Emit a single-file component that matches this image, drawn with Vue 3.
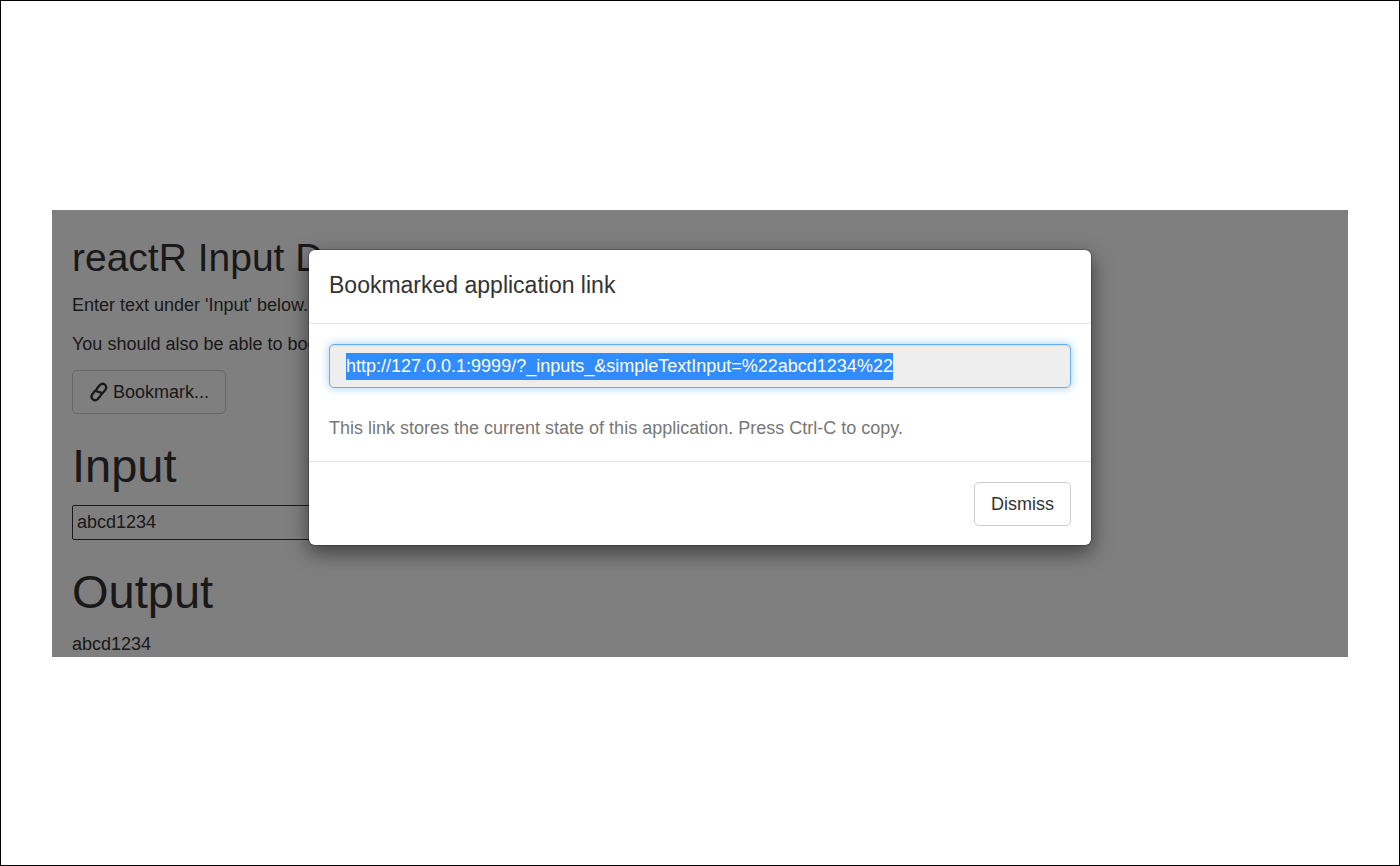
<script setup>
import { onMounted, ref } from 'vue'

const text = ref('abcd1234')
const link = 'http://127.0.0.1:9999/?_inputs_&simpleTextInput=%22abcd1234%22'
const linkField = ref(null)

onMounted(() => {
  linkField.value.focus()
  linkField.value.select()
})
</script>

<template>
  <div class="frame">
    <div class="stage">
      <main class="app">
        <h2>reactR Input Demo</h2>
        <p>Enter text under 'Input' below.</p>
        <p>You should also be able to bookmark</p>
        <button class="btn" type="button">
          <svg class="icon" viewBox="0 0 57 60" aria-hidden="true">
            <path
              d="M37 36L48 23Q53 14 46 8Q38 2 31 9L23 19Q17 27 25 29.5L31 30.5Q39 33 33 41L25 51Q18 58 10 52Q3 46 8 37L19 24"
              fill="none"
              stroke="currentColor"
              stroke-width="7"
            />
          </svg>
          Bookmark...
        </button>
        <h1 id="input-title">Input</h1>
        <input v-model="text" class="plain" type="text" aria-labelledby="input-title" />
        <h1>Output</h1>
        <div>{{ text }}</div>
      </main>
      <div class="backdrop">
        <section class="modal" role="dialog" aria-labelledby="modal-title">
          <header><h4 id="modal-title">Bookmarked application link</h4></header>
          <div class="body">
            <div class="link">
              <input ref="linkField" type="text" readonly :value="link" aria-labelledby="modal-title" />
            </div>
            <span class="help">This link stores the current state of this application. Press Ctrl-C to copy.</span>
          </div>
          <footer><button class="btn" type="button">Dismiss</button></footer>
        </section>
      </div>
    </div>
  </div>
</template>

<style>
body {
  margin: 0;
}
</style>

<style scoped>
* {
  box-sizing: border-box;
}
.frame {
  display: flex;
  align-items: center;
  min-height: 100vh;
  padding: 0 51px;
  border: 1px solid #000;
  background: #fff;
  color: #333;
  font: 18px/26px "Liberation Sans", Arial, sans-serif;
}
.stage {
  position: relative;
  flex: 1;
}
.app {
  display: flow-root;
  padding: 0 20px;
}
h1,
h2,
h4 {
  margin: 0;
  font-weight: 400;
}
h2 {
  margin: 26px 0 13px;
  font-size: 39px;
  line-height: 43px;
}
h1 {
  margin: 26px 0 13px;
  font-size: 47px;
  line-height: 52px;
}
p {
  margin: 0 0 13px;
}
.btn {
  display: flex;
  align-items: center;
  gap: 4px;
  height: 44px;
  padding: 0 16px;
  border: 1px solid #ccc;
  border-radius: 5px;
  background: #fff;
  color: #333;
  font: inherit;
}
.icon {
  width: 20px;
  height: 20px;
}
.plain {
  display: block;
  width: 260px;
  height: 35px;
  padding: 1px 4px 0;
  border: 1px solid #333;
  border-radius: 2px;
  background: #fff;
  color: #333;
  font: inherit;
}
.backdrop {
  position: absolute;
  inset: 0;
  padding: 39px 20px 0;
  background: rgba(0, 0, 0, 0.5);
}
.modal {
  max-width: 784px;
  margin: 0 auto;
  border: 1px solid rgba(0, 0, 0, 0.2);
  border-radius: 7px;
  background: #fff;
  background-clip: padding-box;
  box-shadow: 0 7px 20px rgba(0, 0, 0, 0.5);
}
header {
  padding: 19px 20px 21px;
  border-bottom: 1px solid #e5e5e5;
}
h4 {
  font-size: 23px;
  line-height: 33px;
}
.body {
  padding: 20px;
}
.link {
  display: flex;
  align-items: center;
  height: 44px;
  margin-bottom: 27px;
  padding: 1px 16px 0;
  border: 1px solid #66afe9;
  border-radius: 5px;
  background: #eee;
  box-shadow: inset 0 1px 1px rgba(0, 0, 0, 0.08), 0 0 10px rgba(102, 175, 233, 0.6);
}
.link input {
  field-sizing: content;
  max-width: 100%;
  height: 27px;
  padding: 0;
  border: 0;
  outline: 0;
  background: transparent;
  color: #555;
  font: inherit;
}
.link input:focus {
  background: #308cff;
}
.link input::selection {
  background: #308cff;
  color: #fff;
}
.help {
  display: block;
  color: #777;
}
footer {
  display: flex;
  justify-content: flex-end;
  padding: 20px 20px 19px;
  border-top: 1px solid #e5e5e5;
}
</style>
